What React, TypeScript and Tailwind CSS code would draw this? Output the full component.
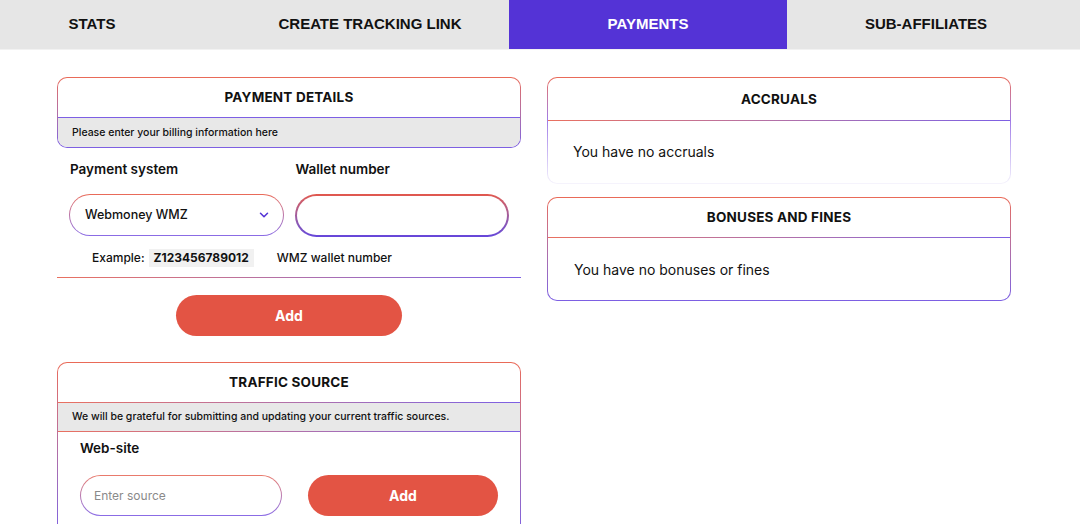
import React from "react";
import { ChevronDown } from "lucide-react";

const font = { fontFamily: "Inter, 'Noto Sans', sans-serif" };

function GradBox({ className, inner, children }: { className?: string; inner?: string; children: React.ReactNode }) {
  return (
    <div className={"bg-linear-to-b from-[#ea6a57] to-[#7c5fe3] p-px " + (className ?? "")}>
      <div className={"bg-white " + (inner ?? "")}>{children}</div>
    </div>
  );
}

function HLine() {
  return <div className="h-px w-full bg-linear-to-r from-[#e9705f] to-[#7d5fe4]" />;
}

export default function App() {
  const tabs = ["CREATE TRACKING LINK", "PAYMENTS", "SUB-AFFILIATES"];
  return (
    <div className="w-[1080px] h-[524px] overflow-hidden bg-white text-[#111]" style={font}>
      <div className="flex h-[50px] bg-[#e6e6e6] border-b border-[#f2f2f2]" style={{ fontFamily: "'Liberation Sans', Arial, sans-serif" }}>
        <div className="w-[231px] pr-[47px] flex items-center justify-center text-[15px] font-bold">STATS</div>
        {tabs.map((t) => (
          <div
            key={t}
            className={
              "w-[278px] flex items-center justify-center text-[15px] font-bold " +
              (t === "PAYMENTS" ? "bg-[#5433d6] text-white" : "")
            }
          >
            {t}
          </div>
        ))}
      </div>

      <div className="flex gap-[26px] pl-[57px] pt-[27px]">
        {/* Left column */}
        <div className="w-[464px] flex flex-col">
          <GradBox className="rounded-[10px]" inner="rounded-[9px] overflow-hidden">
            <div className="h-[39px] flex items-center justify-center text-[13.5px] font-bold tracking-[0.2px]">PAYMENT DETAILS</div>
            <div className="h-px bg-[#7d5fe4]" />
            <div className="h-[29px] bg-[#e8e8e8] flex items-center pl-[14px] text-[10.5px] font-medium">
              Please enter your billing information here
            </div>
          </GradBox>

          <div className="flex gap-[11px] pl-[12px] pr-[12px] mt-[11px]">
            <div className="w-[215px] flex flex-col">
              <div className="h-[20px] flex items-center pl-px text-[13.5px] font-semibold">Payment system</div>
              <div className="mt-[15px] h-[42px] rounded-full bg-linear-to-b from-[#ea6a57] to-[#8a6be6] p-px">
                <div className="h-full rounded-full bg-white flex items-center justify-between pl-[15px] pr-[12px] text-[12.5px] font-medium">
                  <span>Webmoney WMZ</span>
                  <ChevronDown size={14} strokeWidth={2.6} color="#5433d6" />
                </div>
              </div>
            </div>
            <div className="w-[215px] flex flex-col">
              <div className="h-[20px] flex items-center pl-px text-[13.5px] font-semibold">Wallet number</div>
              <div className="mt-[15px] h-[43px] rounded-full bg-linear-to-b from-[#e2574b] to-[#6545db] p-[2px]">
                <div className="h-full rounded-full bg-white" />
              </div>
            </div>
          </div>

          <div className="flex items-center mt-[10px] pl-[35px] h-[22px] text-[12px]">
            <span className="font-medium">Example:</span>
            <span className="ml-[4px] bg-[#f1f1f1] px-[5px] font-bold">Z123456789012</span>
            <span className="ml-[23px] font-medium">WMZ wallet number</span>
          </div>

          <div className="mt-[8px]">
            <HLine />
          </div>

          <div className="flex justify-center mt-[17px]">
            <button className="w-[226px] h-[41px] rounded-full bg-[#e35444] text-white font-bold text-[14px]">Add</button>
          </div>

          <GradBox className="rounded-t-[10px] mt-[26px] pb-0" inner="rounded-t-[9px] overflow-hidden">
            <div className="h-[39px] flex items-center justify-center text-[13.5px] font-bold tracking-[0.2px]">TRAFFIC SOURCE</div>
            <HLine />
            <div className="h-[28px] bg-[#e8e8e8] flex items-center pl-[14px] text-[10.5px] font-medium">
              We will be grateful for submitting and updating your current traffic sources.
            </div>
            <HLine />
            <div className="px-[22px] pt-[6px] pb-[20px]">
              <div className="h-[20px] flex items-center text-[13.5px] font-semibold">Web-site</div>
              <div className="flex gap-[26px] mt-[17px]">
                <div className="w-[202px] h-[41px] rounded-full bg-linear-to-b from-[#ea7a6a] to-[#8a6be6] p-px">
                  <div className="h-full rounded-full bg-white flex items-center pl-[13px] text-[12px] text-[#8a8a8a]">
                    Enter source
                  </div>
                </div>
                <button className="w-[190px] h-[41px] rounded-full bg-[#e35444] text-white font-bold text-[14px]">Add</button>
              </div>
            </div>
          </GradBox>
        </div>

        {/* Right column */}
        <div className="w-[464px] flex flex-col gap-[13px]">
          <div className="rounded-[10px] bg-linear-to-b from-[#ea6a57] via-[#a07ae6] via-40% to-[#f6f4fc] p-px">
            <div className="rounded-[9px] bg-white overflow-hidden">
              <div className="h-[42px] flex items-center justify-center text-[13.5px] font-bold tracking-[0.2px]">ACCRUALS</div>
              <HLine />
              <div className="h-[62px] flex items-center pl-[25px] pb-[2px] text-[14px]">You have no accruals</div>
            </div>
          </div>
          <GradBox className="rounded-[10px]" inner="rounded-[9px] overflow-hidden">
            <div className="h-[39px] flex items-center justify-center text-[13.5px] font-bold tracking-[0.2px]">BONUSES AND FINES</div>
            <HLine />
            <div className="h-[62px] flex items-center pl-[26px] text-[14px]">You have no bonuses or fines</div>
          </GradBox>
        </div>
      </div>
    </div>
  );
}
